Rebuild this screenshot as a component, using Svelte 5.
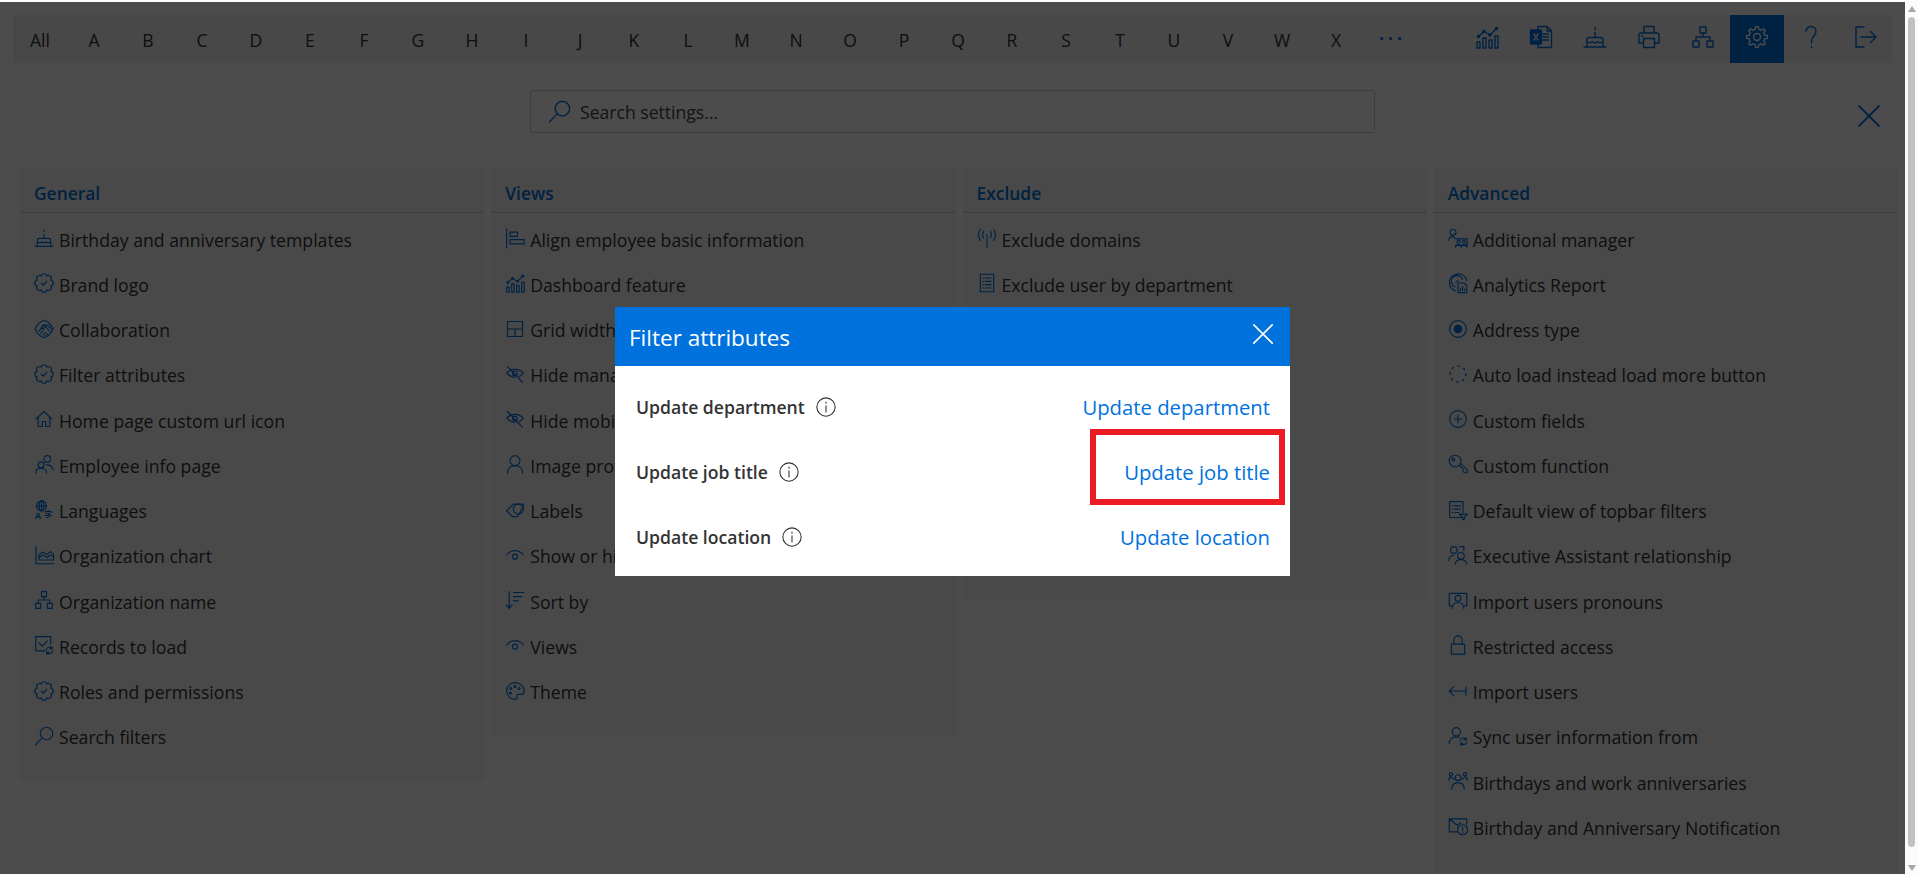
<script>
  function gear(cx, cy, ro, ri, n) {
    let d = '';
    for (let i = 0; i < n; i++) {
      const s = (i / n) * Math.PI * 2, w = (Math.PI * 2) / n;
      const pts = [[ri, s - w * 0.28], [ro, s - w * 0.16], [ro, s + w * 0.16], [ri, s + w * 0.28]];
      pts.forEach(([r, a], j) => {
        d += (i === 0 && j === 0 ? 'M' : 'L') + (cx + r * Math.cos(a)).toFixed(2) + ' ' + (cy + r * Math.sin(a)).toFixed(2) + ' ';
      });
    }
    return d + 'Z';
  }
  function scallop(cx, cy, r, n) {
    let d = '';
    const rr = r * 0.39;
    for (let i = 0; i <= n; i++) {
      const a = (i / n) * Math.PI * 2 + Math.PI / n;
      const p = (cx + r * Math.cos(a)).toFixed(2) + ' ' + (cy + r * Math.sin(a)).toFixed(2);
      d += i === 0 ? 'M' + p + ' ' : `A${rr} ${rr} 0 0 1 ${p} `;
    }
    return d + 'Z';
  }
  const refresh = (x, y) => `<path d="M${x - 4} ${y - 0.5}a4 4 0 0 1 7-2M${x + 4} ${y + 0.5}a4 4 0 0 1-7 2M${x + 3.2} ${y - 4.5}v2.6h-2.6M${x - 3.2} ${y + 4.5}v-2.6h2.6"/>`;
  const badge = `<path d="${scallop(12, 12, 9, 8)}"/><path d="M8.500 12.200l2.500 2.500 4.500-5"/>`;
  const eyeOff = '<path d="M2 11c5-6 15-6 20 0-1.500 1.800-3 3-5 4M12 16c-4 0-7-2-10-5"/><circle cx="12" cy="11.500" r="2.800"/><path d="M3 3l18 19"/>';
  const eye = '<path d="M2 12c5-7 15-7 20 0"/><circle cx="12" cy="14" r="3"/>';
  const dash = '<path d="M2 17h3v6H2zM8 13h3v10H8zM14 15h3v8h-3zM20 11h3v12h-3z"/><path d="M3.500 11.500L9 6.500l6 3.500 6.500-6.500"/><circle cx="3.500" cy="11.500" r="1.100"/><circle cx="9" cy="6.500" r="1.100"/><circle cx="15" cy="10" r="1.100"/><circle cx="21.500" cy="3.500" r="1.100"/>';
  const cake = '<path d="M1 22h22M4 22v-7a2.500 2.500 0 0 1 2.500-2.500h11A2.500 2.500 0 0 1 20 15v7M4 16.500c2.500 2 3.500 2 5.300 0 1.700 2 3.700 2 5.400 0 1.800 2 2.800 2 5.300 0M12 12.500V7.500M12 2.500v2"/>';
  const sitemap = '<path d="M9 2h6v6H9zM2 16h6v6H2zM16 16h6v6h-6zM12 8v4M5 16v-4h14v4"/>';
  const icons = {
    cake, badge, eyeOff, eye, dash, sitemap,
    collab: '<path d="M12 1.500l5 2.500 3.500 3.500L23 12l-3 5-4 4-4 1.500L7.500 20 4 17l-2.500-5L4 7l4-3.500z"/><path d="M6 15l5-8 6 1 4 4M8 17l3-3M11 19l3-3M14 20l2-2M12 7l-3 4 2 1 3-3 5 6"/>',
    home: '<path d="M2.500 12L12 3l9.500 9M5 10v11h5v-6h4v6h5V10"/>',
    employee: '<circle cx="16" cy="6" r="4"/><circle cx="8.500" cy="13" r="3.500"/><path d="M2 23c0-4 3-6 6.500-6s6.500 2 6.500 6M15 13c4 0 7 2 8 6"/>',
    lang: '<circle cx="9" cy="7" r="6"/><ellipse cx="9" cy="7" rx="2.800" ry="6"/><path d="M3 7h12M9 1v12"/><text x="1" y="23" class="gl">A</text><text x="12" y="20" class="gl2">字</text>',
    area: '<path d="M2.500 1.500V22.500H24"/><path d="M6 18v-6l5-3.500 4.500 3L20 8l3.500 3.500V18zM6 15l5-3 4.500 3 4.500-3 3.500 2"/>',
    records: '<path d="M20 11V2H2v17h11"/><path d="M6 9.500l4 4 6-6.500"/>' + refresh(18.500, 18.500),
    search: '<circle cx="15" cy="9" r="7.500"/><path d="M9.500 14.500L1.500 23"/>',
    align: '<path d="M2 1v23M6 5h9v5H6zM6 14h17v5H6z"/>',
    grid: '<path d="M3 3h18v18H3zM3 12h18M12 12v9"/>',
    user: '<circle cx="12" cy="8" r="6"/><path d="M3 23c0-6 4-9 9-9s9 3 9 9"/>',
    label: '<path d="M2 13l8-8h11.500a1.500 1.500 0 0 1 .5 2.500L15 20H9z"/><circle cx="16" cy="11" r="6"/>',
    sort: '<path d="M5 2v20M1.500 18L5 22l3.500-4M10 3h13M10 8h10M10 13h6"/>',
    palette: '<path d="M12 2a10 10 0 0 0 0 20c2.500 0 3-1.500 2.200-3-.8-1.800.3-3 2-3H20c2 0 3-1.500 3-4 0-5.500-5-10-11-10z"/><circle cx="7" cy="9" r="1.200"/><circle cx="12" cy="6.500" r="1.200"/><circle cx="17" cy="9" r="1.200"/><circle cx="6.500" cy="14.500" r="1.200"/>',
    antenna: '<path d="M12 8v15M8 4c-1.500 2.500-1.500 6 0 8M16 4c1.500 2.500 1.500 6 0 8M4 1.500c-2.500 4-2.500 9.500 0 13.500M20 1.500c2.500 4 2.500 9.500 0 13.500"/>',
    doc: '<path d="M4 1.500h16v21H4zM7 6h1M10 6h7M7 10h1M10 10h7M7 14h1M10 14h7M7 18h1M10 18h7"/>',
    addmgr: '<circle cx="6" cy="5" r="3.500"/><path d="M1 15c0-3 2-5 5-5l3 3M9 13h14v8H9"/><circle cx="12.500" cy="16.500" r="1.800"/><circle cx="19" cy="16.500" r="1.800"/><path d="M9 23c0-2 1.500-3 3.500-3s3.500 1 3.500 3c0-2 1.500-3 3-3s3.500 1 3.500 3"/>',
    analytics: '<path d="M9 21.500A10.500 10.500 0 1 1 22.500 9M8.500 16.500a7 7 0 1 1 9-9M9.500 11.500a3.500 3.500 0 0 1 3-2"/><path d="M12 12h7l3.500 3v8.500H12zM15 21v-3M17.500 21v-5M20 21v-2"/>',
    radio: '<circle cx="12" cy="12" r="10"/><circle cx="12" cy="12" r="4.500" fill="currentColor"/>',
    spinner: '<g stroke-dasharray="1.500 5.900" stroke-width="1.800"><circle cx="12" cy="12" r="9.500"/></g>',
    plus: '<circle cx="12" cy="12" r="10"/><path d="M12 7.500v9M7.500 12h9"/>',
    key: '<circle cx="8.500" cy="8.500" r="7"/><circle cx="6.500" cy="6.500" r="1.500"/><path d="M13.500 13.500L18 18l.5 3 1 1.500H23V19l-7.500-7.500"/>',
    filterlist: '<path d="M16 21H2V2h16v13M5 7h1M8 7h7M5 11h1M8 11h7M5 15h1M8 15h5M13.500 17h10l-4 3.500v3h-2v-3z"/>',
    execs: '<circle cx="7" cy="6" r="4"/><circle cx="15.500" cy="13" r="4"/><path d="M1 19c0-4 2.500-6.500 6-6.500M8.500 23c0-3 3-5.500 7-5.500s7 2.500 7 5.500M14 2h5v5"/>',
    pronoun: '<path d="M5 19H1.500V4h21v15H19"/><circle cx="12" cy="10" r="3.500"/><path d="M5 22c.5-4 3-7 7-7s6.500 3 7 7"/>',
    lock: '<path d="M4 11h16v12H4zM7 11V6a5 5 0 0 1 10 0v5"/>',
    importu: '<path d="M21.500 7v10M21 12H2M7 6.500L1.500 12 7 17.500"/>',
    syncu: '<circle cx="10" cy="7" r="5"/><path d="M1.500 21c0-5 3.500-8 8.500-8 1.500 0 2.500.2 3.500.7"/>' + refresh(18.500, 18.500),
    group: '<circle cx="12" cy="8" r="3.500"/><circle cx="3.500" cy="4" r="2"/><circle cx="20.500" cy="4" r="2"/><path d="M4.500 22c0-5 3-8 7.500-8s7.500 3 7.500 8M1 11c0-2 1-4 3-4l3 3M23 11c0-2-1-4-3-4l-3 3"/>',
    mailalert: '<path d="M12 19H1.500V3.500h21V10M2 4l9 7 4-3"/><circle cx="17.500" cy="16.500" r="6"/><path d="M17.500 13v4M17.500 19v1"/>',
    excel: '<path d="M9 5V1.500h9l4.500 4.500v16.500H9V19"/><path d="M18 1.500V6h4.500M14 9h5.500M14 12h5.500M14 15h5.500"/><rect x="1.500" y="5" width="11" height="14" rx="1" fill="currentColor"/><path d="M5 9l4 6M9 9l-4 6" stroke="var(--xmark)"/>',
    print: '<path d="M7 8V1.500h10V8M6.500 18H2V10a2 2 0 0 1 2-2h16a2 2 0 0 1 2 2v8h-4.500M6.500 13.500h11v9h-11zM5 11h1"/>',
    gearic: `<path d="${gear(12, 12, 10.5, 8, 8)}"/><circle cx="12" cy="12" r="3.500"/>`,
    help: '<path d="M7 6.500C7 3.500 9.300 1.500 12 1.500s5 2 5 5c0 4-4.500 5-4.500 9.500v2M12.500 21.500v1"/>',
    logout: '<path d="M11 2H3v20h8M8 12h15M17.500 6.500L23 12l-5.500 5.500"/>',
    close: '<path d="M2 2l20 20M22 2L2 22"/>',
    info: '<circle cx="12" cy="12" r="11"/><path d="M12 10.500v7.500M12 6v1.500"/>'
  };

  const letters = ['All', ...'ABCDEFGHIJKLMNOPQRSTUVWX'.split(''), '···'];
  const tools = [
    { i: 'dash' }, { i: 'excel' }, { i: 'cake' }, { i: 'print' }, { i: 'sitemap' },
    { i: 'gearic', active: true }, { i: 'help' }, { i: 'logout' }
  ];

  const columns = [
    { title: 'General', rows: [
      ['cake', 'Birthday and anniversary templates'], ['badge', 'Brand logo'], ['collab', 'Collaboration'],
      ['badge', 'Filter attributes'], ['home', 'Home page custom url icon'], ['employee', 'Employee info page'],
      ['lang', 'Languages'], ['area', 'Organization chart'], ['sitemap', 'Organization name'],
      ['records', 'Records to load'], ['badge', 'Roles and permissions'], ['search', 'Search filters']
    ] },
    { title: 'Views', rows: [
      ['align', 'Align employee basic information'], ['dash', 'Dashboard feature'], ['grid', 'Grid width'],
      ['eyeOff', 'Hide manager'], ['eyeOff', 'Hide mobile'], ['user', 'Image profile'], ['label', 'Labels'],
      ['eye', 'Show or hide'], ['sort', 'Sort by'], ['eye', 'Views'], ['palette', 'Theme']
    ] },
    { title: 'Exclude', tall: true, rows: [
      ['antenna', 'Exclude domains'], ['doc', 'Exclude user by department']
    ] },
    { title: 'Advanced', rows: [
      ['addmgr', 'Additional manager'], ['analytics', 'Analytics Report'], ['radio', 'Address type'],
      ['spinner', 'Auto load instead load more button'], ['plus', 'Custom fields'], ['key', 'Custom function'],
      ['filterlist', 'Default view of topbar filters'], ['execs', 'Executive Assistant relationship'],
      ['pronoun', 'Import users pronouns'], ['lock', 'Restricted access'], ['importu', 'Import users'],
      ['syncu', 'Sync user information from'], ['group', 'Birthdays and work anniversaries'],
      ['mailalert', 'Birthday and Anniversary Notification']
    ] }
  ];

  const attrs = ['Update department', 'Update job title', 'Update location'];
</script>

<div class="app">
  <div class="page">
    <nav class="topbar">
      <div class="letters">
        {#each letters as l}
          <span class="letter" class:dots={l === '···'}>{l}</span>
        {/each}
      </div>
      <div class="tools">
        {#each tools as t}
          <span class="tool" class:active={t.active}>
            <svg viewBox="0 0 24 24" class="tool-ic">{@html icons[t.i]}</svg>
          </span>
        {/each}
      </div>
    </nav>

    <div class="searchrow">
      <span></span>
      <div class="search">
        <svg viewBox="0 0 24 24" class="search-ic">{@html icons.search}</svg>
        <span>Search settings...</span>
      </div>
      <svg viewBox="0 0 24 24" class="bigclose">{@html icons.close}</svg>
    </div>

    <div class="columns">
      {#each columns as c}
        <section class="panel" class:tall={c.tall}>
          <h2>{c.title}</h2>
          <ul>
            {#each c.rows as r}
              <li>
                <svg viewBox="0 0 24 24" class="row-ic">{@html icons[r[0]]}</svg>
                <span>{r[1]}</span>
              </li>
            {/each}
          </ul>
        </section>
      {/each}
    </div>

    <div class="overlay">
      <div class="modal">
        <header>
          <span class="modal-title">Filter attributes</span>
          <svg viewBox="0 0 24 24" class="modal-close">{@html icons.close}</svg>
        </header>
        <div class="modal-body">
          {#each attrs as a}
            <div class="attr">
              <span class="attr-label">{a}</span>
              <svg viewBox="0 0 24 24" class="info">{@html icons.info}</svg>
              <span class="attr-link">{a}</span>
            </div>
          {/each}
          <div class="callout"></div>
        </div>
      </div>
    </div>
  </div>

  <div class="scrollbar">
    <i class="arrow up"></i>
    <b class="thumb"></b>
    <i class="arrow down"></i>
  </div>
</div>

<style>
  :global(body) {
    margin: 0;
    overflow: hidden;
    background: #fff;
  }
  .app {
    display: flex;
    height: 874px;
    overflow: hidden;
    font-family: "Open Sans", "Liberation Sans", sans-serif;
    color: #333;
  }
  .page {
    position: relative;
    flex: 1;
    min-width: 0;
    margin-top: 2px;
    background: #fff;
  }
  .topbar {
    display: flex;
    justify-content: space-between;
    height: 48px;
    margin: 13px 13px 0;
    background: #f0f0f0;
  }
  .letters, .tools { display: flex; }
  .letter {
    width: 54px;
    line-height: 50px;
    text-align: center;
    font-size: 17.6px;
    color: #333;
  }
  .letter.dots {
    color: #0072de;
    font-weight: 700;
    line-height: 46px;
    letter-spacing: 4px;
    box-sizing: border-box;
    padding-left: 5px;
  }
  .tool {
    display: flex;
    align-items: center;
    justify-content: center;
    width: 54px;
    color: #0072de;
    --xmark: #f0f0f0;
  }
  .tool.active { background: #0072de; color: #fff; }
  svg {
    fill: none;
    stroke: currentColor;
    stroke-width: 1.4;
    stroke-linecap: round;
    stroke-linejoin: round;
    flex: none;
    overflow: visible;
  }
  .tool-ic { width: 24px; height: 24px; margin-top: -4px; }
  .searchrow {
    display: grid;
    grid-template-columns: 1fr 845px 1fr;
    margin-top: 27px;
  }
  .search {
    display: flex;
    align-items: center;
    gap: 9px;
    height: 43px;
    box-sizing: border-box;
    padding-left: 17px;
    border: 1px solid #ccc;
    border-radius: 2px;
    font-size: 17.6px;
    color: #444;
  }
  .search-ic { width: 23px; height: 23px; color: #0072de; }
  .bigclose {
    justify-self: end;
    width: 24px;
    height: 24px;
    margin: 14px 24px 0 0;
    color: #0072de;
    stroke-width: 1.8;
  }
  .columns {
    display: grid;
    grid-template-columns: repeat(4, 1fr);
    gap: 7px;
    align-items: start;
    margin-top: 34px;
    padding: 0 7px 0 20px;
  }
  .panel {
    background: #f6f6f6;
    padding-bottom: 21px;
  }
  .panel.tall { min-height: 434px; box-sizing: border-box; }
  h2 {
    height: 46px;
    margin: 0;
    padding-left: 14px;
    box-sizing: border-box;
    border-bottom: 1px solid #ccc;
    font-size: 17.4px;
    font-weight: 600;
    line-height: 53px;
    color: #0072de;
  }
  ul {
    margin: 0;
    padding: 4px 0 0 14px;
    list-style: none;
  }
  li {
    display: flex;
    align-items: center;
    gap: 5px;
    height: 45.25px;
    font-size: 17.65px;
    color: #333;
    white-space: nowrap;
  }
  .row-ic { width: 20px; height: 20px; color: #0072de; margin-top: -3px; }
  .overlay {
    position: absolute;
    inset: 0;
    display: flex;
    align-items: center;
    justify-content: center;
    padding-top: 6px;
    box-sizing: border-box;
    background: rgba(0, 0, 0, 0.7);
  }
  .modal {
    width: 675px;
    background: #fff;
  }
  .modal header {
    display: flex;
    align-items: center;
    justify-content: space-between;
    height: 59px;
    padding: 0 16px 0 14px;
    background: #0072de;
    color: #fff;
    font-size: 22.5px;
  }
  .modal-title { padding-top: 3px; }
  .modal-close { width: 22px; height: 22px; margin-top: -4px; stroke-width: 1.8; }
  .modal-body {
    position: relative;
    padding: 9px 20px 6px 21px;
  }
  .attr {
    display: flex;
    align-items: center;
    gap: 11px;
    height: 65px;
  }
  .attr-label { font-size: 17.6px; font-weight: 600; color: #333; }
  .info { width: 20px; height: 20px; color: #333; stroke-width: 1.3; }
  .attr-link {
    margin-left: auto;
    font-size: 20.3px;
    color: #0072de;
  }
  .callout {
    position: absolute;
    top: 63px;
    right: 5px;
    width: 195px;
    height: 76px;
    box-sizing: border-box;
    border: 6px solid #ed1c24;
  }
  .scrollbar {
    position: relative;
    display: flex;
    flex-direction: column;
    align-items: center;
    justify-content: space-between;
    width: 13px;
    background: #fbfbfb;
    padding: 6px 0 3px;
    box-sizing: border-box;
  }
  .thumb {
    flex: 1;
    width: 7px;
    margin: 5px 0 18px;
    border-radius: 4px;
    background: #c1c1c1;
  }
  .arrow {
    width: 0;
    height: 0;
    border-left: 4px solid transparent;
    border-right: 4px solid transparent;
  }
  .arrow.up { border-bottom: 6px solid #a8a8a8; }
  .arrow.down { border-top: 6px solid #a8a8a8; }
  :global(.gl) { font: 700 11px "Open Sans", sans-serif; fill: currentColor; stroke: none; }
  :global(.gl2) { font: 700 10px "Noto Sans CJK SC", sans-serif; fill: currentColor; stroke: none; }
</style>
